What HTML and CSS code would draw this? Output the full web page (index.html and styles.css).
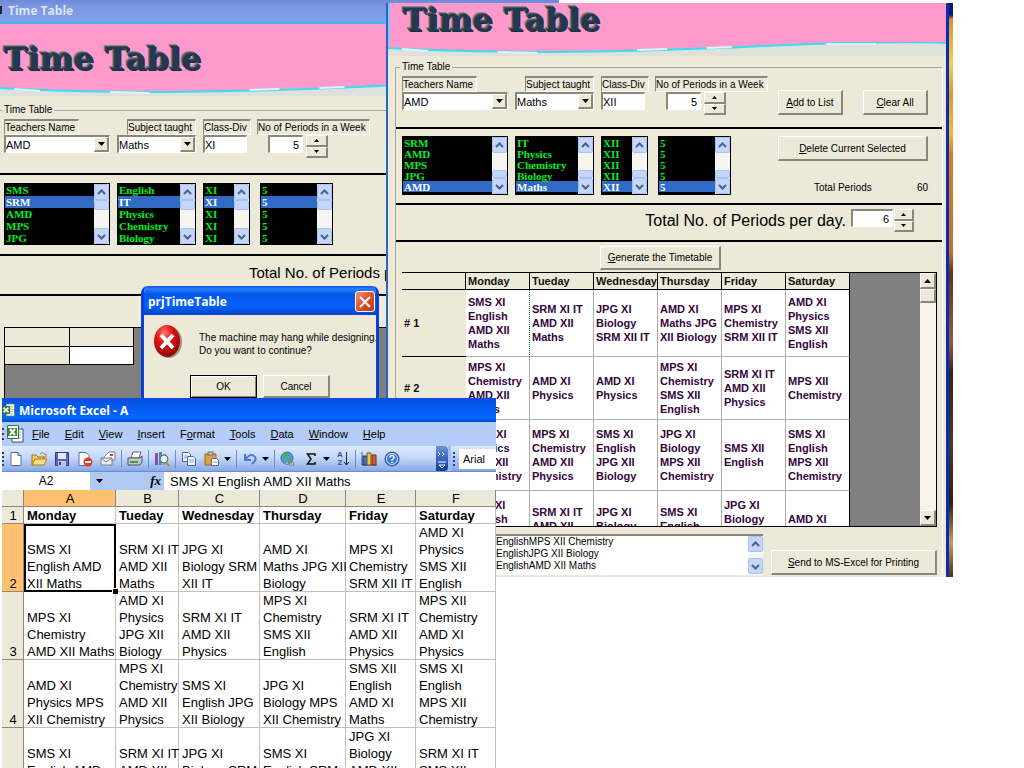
FILE: index.html
```
<!doctype html>
<html lang="en">
<head>
<meta charset="utf-8" />
<title>Time Table</title>
<link rel="stylesheet" href="styles.css">
</head>
<body>

<svg class="symbols" aria-hidden="true">
	<symbol id="chevron-up" viewBox="0 0 9 9"><path d="M1 6 4.500 2.500 8 6" fill="none" stroke="#4d6185" stroke-width="2"/></symbol>
	<symbol id="chevron-down" viewBox="0 0 9 9"><path d="M1 3 4.500 6.500 8 3" fill="none" stroke="#4d6185" stroke-width="2"/></symbol>
	<symbol id="tri-up" viewBox="0 0 7 4"><path d="M0 4 3.500 0 7 4z"/></symbol>
	<symbol id="tri-down" viewBox="0 0 7 4"><path d="M0 0h7L3.500 4z"/></symbol>
	<symbol id="excel" viewBox="0 0 16 16">
		<path d="M5 .5h10.500v15H5z" fill="#fff" stroke="#4b7a4b"/>
		<path d="M10 4h4M10 7h4M10 10h4M10 13h4" stroke="#8fb78f"/>
		<path d="M0 3h10v10H0z" fill="#2f7d3a"/>
		<path d="M2 5l6 6M8 5l-6 6" stroke="#fff" stroke-width="2"/>
	</symbol>
	<symbol id="wave" viewBox="0 0 560 14" preserveAspectRatio="none">
		<path d="M0 0H560V1Q460 1 380 4T160 10Q70 10 0 6z" fill="#ff99cc"/>
		<path d="M0 6Q70 10 160 10T380 4T560 1" fill="none" stroke="#35dff0" stroke-width="2"/>
		<path d="M14 7 40 9M110 10 150 11M250 8 280 7M320 6 345 5M440 2 490 2" stroke="#d8f8fa" stroke-width="2"/>
	</symbol>
</svg>

<main class="desktop">

<section class="window back">
	<header class="faded-title"><span class="app-dot"></span>Time Table</header>
	<div class="banner"><h1>Time Table</h1></div>
	<svg class="wave" preserveAspectRatio="none"><use href="#wave"/></svg>
	<fieldset class="frame">
		<legend>Time Table</legend>
		<div class="section fields">
			<div class="field-grid">
				<div class="field">
					<label for="b-teacher">Teachers Name</label>
					<div class="combo"><select id="b-teacher"><option>AMD</option></select><span class="drop"><svg><use href="#tri-down"/></svg></span></div>
				</div>
				<div class="field">
					<label class="indent" for="b-subject">Subject taught</label>
					<div class="combo"><select id="b-subject"><option>Maths</option></select><span class="drop"><svg><use href="#tri-down"/></svg></span></div>
				</div>
				<div class="field">
					<label for="b-class">Class-Div</label>
					<input class="text" id="b-class" type="text" value="XI">
				</div>
				<div class="field">
					<label for="b-periods">No of Periods in a Week</label>
					<div class="spinner inset"><input class="text" id="b-periods" type="text" value="5"><span class="spin"><button aria-label="More"><svg><use href="#tri-up"/></svg></button><button aria-label="Fewer"><svg><use href="#tri-down"/></svg></button></span></div>
				</div>
			</div>
		</div>
		<div class="section lists">
			<div class="field-grid">
				<div class="list">
					<select size="5" aria-label="Teachers"><option>SMS</option><option selected>SRM</option><option>AMD</option><option>MPS</option><option>JPG</option></select>
					<div class="scroll"><button aria-label="Up"><svg><use href="#chevron-up"/></svg></button><i class="thumb"></i><button aria-label="Down"><svg><use href="#chevron-down"/></svg></button></div>
				</div>
				<div class="list">
					<select size="5" aria-label="Subjects"><option>English</option><option selected>IT</option><option>Physics</option><option>Chemistry</option><option>Biology</option></select>
					<div class="scroll"><button aria-label="Up"><svg><use href="#chevron-up"/></svg></button><i class="thumb"></i><button aria-label="Down"><svg><use href="#chevron-down"/></svg></button></div>
				</div>
				<div class="list">
					<select size="5" aria-label="Classes"><option>XI</option><option selected>XI</option><option>XI</option><option>XI</option><option>XI</option></select>
					<div class="scroll"><button aria-label="Up"><svg><use href="#chevron-up"/></svg></button><i class="thumb"></i><button aria-label="Down"><svg><use href="#chevron-down"/></svg></button></div>
				</div>
				<div class="list short">
					<select size="5" aria-label="Periods"><option>5</option><option selected>5</option><option>5</option><option>5</option><option>5</option></select>
					<div class="scroll"><button aria-label="Up"><svg><use href="#chevron-up"/></svg></button><i class="thumb"></i><button aria-label="Down"><svg><use href="#chevron-down"/></svg></button></div>
				</div>
			</div>
		</div>
		<div class="section total"><span class="per-day">Total No. of Periods per day.</span></div>
		<div class="empty-grid">
			<table>
				<tr><td></td><td></td></tr>
				<tr><td></td><td class="open"></td></tr>
			</table>
		</div>
	</fieldset>
</section>

<div class="wallpaper"></div>

<section class="window front">
	<div class="banner"><h1>Time Table</h1></div>
	<svg class="wave" preserveAspectRatio="none"><use href="#wave"/></svg>
	<fieldset class="frame">
		<legend>Time Table</legend>
		<div class="section fields">
			<div class="field-grid">
				<div class="field">
					<label for="f-teacher">Teachers Name</label>
					<div class="combo"><select id="f-teacher"><option>AMD</option></select><span class="drop"><svg><use href="#tri-down"/></svg></span></div>
				</div>
				<div class="field">
					<label class="indent" for="f-subject">Subject taught</label>
					<div class="combo"><select id="f-subject"><option>Maths</option></select><span class="drop"><svg><use href="#tri-down"/></svg></span></div>
				</div>
				<div class="field">
					<label for="f-class">Class-Div</label>
					<input class="text" id="f-class" type="text" value="XII">
				</div>
				<div class="field">
					<label for="f-periods">No of Periods in a Week</label>
					<div class="spinner inset"><input class="text" id="f-periods" type="text" value="5"><span class="spin"><button aria-label="More"><svg><use href="#tri-up"/></svg></button><button aria-label="Fewer"><svg><use href="#tri-down"/></svg></button></span></div>
				</div>
			</div>
			<div class="actions">
				<button class="btn"><u>A</u>dd to List</button>
				<button class="btn"><u>C</u>lear All</button>
			</div>
		</div>
		<div class="section lists">
			<div class="field-grid">
				<div class="list">
					<select size="5" aria-label="Teachers"><option>SRM</option><option>AMD</option><option>MPS</option><option>JPG</option><option selected>AMD</option></select>
					<div class="scroll low"><button aria-label="Up"><svg><use href="#chevron-up"/></svg></button><i class="thumb"></i><button aria-label="Down"><svg><use href="#chevron-down"/></svg></button></div>
				</div>
				<div class="list">
					<select size="5" aria-label="Subjects"><option>IT</option><option>Physics</option><option>Chemistry</option><option>Biology</option><option selected>Maths</option></select>
					<div class="scroll low"><button aria-label="Up"><svg><use href="#chevron-up"/></svg></button><i class="thumb"></i><button aria-label="Down"><svg><use href="#chevron-down"/></svg></button></div>
				</div>
				<div class="list">
					<select size="5" aria-label="Classes"><option>XII</option><option>XII</option><option>XII</option><option>XII</option><option selected>XII</option></select>
					<div class="scroll low"><button aria-label="Up"><svg><use href="#chevron-up"/></svg></button><i class="thumb"></i><button aria-label="Down"><svg><use href="#chevron-down"/></svg></button></div>
				</div>
				<div class="list short">
					<select size="5" aria-label="Periods"><option>5</option><option>5</option><option>5</option><option>5</option><option selected>5</option></select>
					<div class="scroll low"><button aria-label="Up"><svg><use href="#chevron-up"/></svg></button><i class="thumb"></i><button aria-label="Down"><svg><use href="#chevron-down"/></svg></button></div>
				</div>
			</div>
			<div class="summary">
				<button class="btn"><u>D</u>elete Current Selected</button>
				<p><span>Total Periods</span><span>60</span></p>
			</div>
		</div>
		<div class="section total">
			<label class="per-day" for="per-day">Total No. of Periods per day.</label>
			<div class="spinner"><input class="text" id="per-day" type="text" value="6"><span class="spin"><button aria-label="More"><svg><use href="#tri-up"/></svg></button><button aria-label="Fewer"><svg><use href="#tri-down"/></svg></button></span></div>
		</div>
		<div class="generate"><button class="btn"><u>G</u>enerate the Timetable</button></div>
		<div class="timetable">
			<div class="rows">
				<table>
					<thead>
						<tr><th></th><th>Monday</th><th>Tueday</th><th>Wednesday</th><th>Thursday</th><th>Friday</th><th>Saturday</th></tr>
					</thead>
					<tbody>
						<tr class="r1">
							<th># 1</th>
							<td class="current">SMS XI<br>English<br>AMD XII<br>Maths</td>
							<td>SRM XI IT<br>AMD XII<br>Maths</td>
							<td>JPG XI<br>Biology<br>SRM XII IT</td>
							<td>AMD XI<br>Maths JPG<br>XII Biology</td>
							<td>MPS XI<br>Chemistry<br>SRM XII IT</td>
							<td>AMD XI<br>Physics<br>SMS XII<br>English</td>
						</tr>
						<tr class="r2">
							<th># 2</th>
							<td>MPS XI<br>Chemistry<br>AMD XII<br>Maths</td>
							<td>AMD XI<br>Physics</td>
							<td>AMD XI<br>Physics</td>
							<td>MPS XI<br>Chemistry<br>SMS XII<br>English</td>
							<td>SRM XI IT<br>AMD XII<br>Physics</td>
							<td>MPS XII<br>Chemistry</td>
						</tr>
						<tr class="r3">
							<th># 3</th>
							<td>AMD XI<br>Physics<br>MPS XII<br>Chemistry</td>
							<td>MPS XI<br>Chemistry<br>AMD XII<br>Physics</td>
							<td>SMS XI<br>English<br>JPG XII<br>Biology</td>
							<td>JPG XI<br>Biology<br>MPS XII<br>Chemistry</td>
							<td>SMS XII<br>English</td>
							<td>SMS XI<br>English<br>MPS XII<br>Chemistry</td>
						</tr>
						<tr class="r3">
							<th># 4</th>
							<td>SMS XI<br>English<br>AMD XII<br>Maths</td>
							<td>SRM XI IT<br>AMD XII<br>Physics</td>
							<td>JPG XI<br>Biology<br>SRM XII IT</td>
							<td>SMS XI<br>English<br>SRM XII IT</td>
							<td>JPG XI<br>Biology<br>AMD XII<br>Physics</td>
							<td>AMD XI<br>Physics</td>
						</tr>
					</tbody>
				</table>
			</div>
			<div class="classic-scroll"><button aria-label="Up"><svg><use href="#tri-up"/></svg></button><i class="thumb"></i><button aria-label="Down"><svg><use href="#tri-down"/></svg></button></div>
		</div>
		<div class="output">
			<div class="log">
				<textarea aria-label="Output" rows="3">EnglishMPS XII Chemistry
EnglishJPG XII Biology
EnglishAMD XII Maths</textarea>
				<div class="scroll"><button aria-label="Up"><svg><use href="#chevron-up"/></svg></button><button aria-label="Down"><svg><use href="#chevron-down"/></svg></button></div>
			</div>
			<button class="btn"><u>S</u>end to MS-Excel for Printing</button>
		</div>
	</fieldset>
</section>

<section class="dialog" role="dialog" aria-labelledby="dialog-title">
	<header><h2 id="dialog-title">prjTimeTable</h2><button class="close" aria-label="Close"><svg viewBox="0 0 12 12"><path d="M1 1l10 10M11 1 1 11" stroke="#fff" stroke-width="2"/></svg></button></header>
	<div class="message">
		<svg class="error" viewBox="0 0 30 34">
			<defs><radialGradient id="ball" cx=".4" cy=".25" r=".8"><stop offset="0" stop-color="#f77"/><stop offset=".4" stop-color="#e01414"/><stop offset="1" stop-color="#8c0505"/></radialGradient></defs>
			<ellipse cx="15" cy="17" rx="13" ry="16" fill="#9a9788"/>
			<ellipse cx="13" cy="16" rx="13" ry="16" fill="url(#ball)"/>
			<path d="M7 10l12 13M19 10 7 23" stroke="#fff" stroke-width="4"/>
		</svg>
		<p>The machine may hang while designing,<br>Do you want to continue?</p>
	</div>
	<div class="choices"><button class="btn default">OK</button><button class="btn">Cancel</button></div>
</section>

<section class="excel">
	<header><svg><use href="#excel"/></svg><h2>Microsoft Excel - A</h2></header>
	<nav class="menu">
		<svg viewBox="0 0 22 18"><path d="M1 3v2M1 8v2M1 13v2" stroke="#27408b" stroke-width="2"/><path d="M10 4h11v13H10z" fill="#fff" stroke="#3c4a78"/><path d="M15 7h4M15 10h4M15 13h4" stroke="#8a9ac0"/><path d="M5.500.5h11v13h-11z" fill="#f5fff5" stroke="#3d703d"/><path d="M6 3h9v8H6z" fill="#3b8a3b"/><path d="M8 4l5 6M13 4l-5 6" stroke="#fff" stroke-width="2"/></svg>
		<a href="#"><u>F</u>ile</a><a href="#"><u>E</u>dit</a><a href="#"><u>V</u>iew</a><a href="#"><u>I</u>nsert</a><a href="#">F<u>o</u>rmat</a><a href="#"><u>T</u>ools</a><a href="#"><u>D</u>ata</a><a href="#"><u>W</u>indow</a><a href="#"><u>H</u>elp</a>
	</nav>
	<div class="tools">
		<div class="toolbar">
			<svg class="grip" viewBox="0 0 4 16"><path d="M1 1v2M1 5v2M1 9v2M1 13v2" stroke="#27408b" stroke-width="2"/></svg>
			<button aria-label="New"><svg viewBox="0 0 16 16"><path d="M3 1.500h7l3 3v10H3z" fill="#fff" stroke="#5a6a94"/><path d="M10 1.500v3h3" fill="#cdd8f0" stroke="#5a6a94"/></svg></button>
			<button aria-label="Open"><svg viewBox="0 0 16 16"><path d="M1 14V4h4l2 2h6v3" fill="#f0c860" stroke="#a8771a"/><path d="M1 14 4 8h12l-3 6z" fill="#fddc7c" stroke="#a8771a"/><path d="M9 3q3-3 5 1l1-1v3h-3" fill="none" stroke="#d27b1e"/></svg></button>
			<button aria-label="Save"><svg viewBox="0 0 16 16"><path d="M1.500 1.500h13v13h-13z" fill="#5b62bf" stroke="#34398a"/><path d="M4 2h8v6H4z" fill="#e6eafc"/><path d="M4 10h8v5H4z" fill="#c2c6e2"/><path d="M5 11h2v3H5z" fill="#34398a"/></svg></button>
			<button aria-label="Permission"><svg viewBox="0 0 16 16"><path d="M2 1.500h7l3 3v10H2z" fill="#fff" stroke="#5a6a94"/><circle cx="11" cy="11" r="4.500" fill="#dd3f20"/><path d="M8 11h6" stroke="#fff" stroke-width="2"/></svg></button>
			<button aria-label="E-mail"><svg viewBox="0 0 16 16"><path d="M4 6 9 1h6v8H4z" fill="#fff" stroke="#7d7d8e"/><path d="M10 3h3v2h-3z" fill="#d04030"/><path d="M1 7h11v7H1z" fill="#ececf2" stroke="#7d7d8e"/><path d="M1 7l5 4 6-4" fill="none" stroke="#7d7d8e"/></svg></button>
			<span class="sep"></span>
			<button aria-label="Print"><svg viewBox="0 0 16 16"><path d="M4 7 6 1h8l-2 6z" fill="#fff" stroke="#667"/><path d="M1 7h12l2-2v6l-2 3H1z" fill="#c3c9d2" stroke="#4b5563"/><path d="M3 10h8v2H3z" fill="#3f9d3b"/></svg></button>
			<span class="sep"></span>
			<button aria-label="Research"><svg viewBox="0 0 16 16"><path d="M1 2h3v12H1z" fill="#8a4fa5"/><path d="M5 1h3v13H5z" fill="#5b83c4"/><path d="M9 3h3v11H9z" fill="#9aa6b8"/><circle cx="10" cy="8" r="4" fill="#dff5f0" stroke="#4f6a6a"/><path d="M12 11l3 4" stroke="#b08020" stroke-width="2"/></svg></button>
			<span class="sep"></span>
			<button aria-label="Copy"><svg viewBox="0 0 16 16"><path d="M1.500 1.500h6l2 2v7h-8z" fill="#fff" stroke="#4a6ab0"/><path d="M3 5h4M3 7h4" stroke="#7c9adc"/><path d="M6.500 5.500h6l2 2v7h-8z" fill="#fff" stroke="#4a6ab0"/><path d="M8 9h5M8 11h5" stroke="#7c9adc"/></svg></button>
			<button aria-label="Paste"><svg viewBox="0 0 16 16"><path d="M1 3h11v11H1z" fill="#e0a03c" stroke="#96641a"/><path d="M4 1h5v3H4z" fill="#c9ced8" stroke="#666"/><path d="M7.500 7.500h5l2 2v5h-7z" fill="#fff" stroke="#5a6a94"/><path d="M9 11h4" stroke="#7c9adc"/></svg></button>
			<svg class="more"><use href="#tri-down"/></svg>
			<span class="sep"></span>
			<button aria-label="Undo"><svg viewBox="0 0 16 16"><path d="M3 3v6h6M3.500 8.500Q8 2 12 5T10 13" fill="none" stroke="#4a78d4" stroke-width="2"/></svg></button>
			<svg class="more"><use href="#tri-down"/></svg>
			<span class="sep"></span>
			<button aria-label="Hyperlink"><svg viewBox="0 0 16 16"><circle cx="7" cy="7" r="6" fill="#4f9fdc" stroke="#2b68a8"/><path d="M3 3q4-3 6 0-1 4-5 3zM7 8q4-1 5 1-2 4-4 3z" fill="#4db04a"/><path d="M5 12h4M9 13h5" stroke="#77808f" stroke-width="3"/><path d="M6 12h2M10 13h3" stroke="#eef"/></svg></button>
			<button aria-label="AutoSum"><svg viewBox="0 0 16 16"><path d="M12 5V3H4.500L8 8l-3.500 5H12v-2" fill="none" stroke="#111" stroke-width="1.500"/></svg></button>
			<svg class="more"><use href="#tri-down"/></svg>
			<button class="sort" aria-label="Sort ascending"><span>A<br>Z</span><svg viewBox="0 0 7 16"><path d="M3.500 1v13M1 11l2.500 3L6 11" fill="none" stroke="#222"/></svg></button>
			<span class="sep"></span>
			<button aria-label="Chart Wizard"><svg viewBox="0 0 16 16"><path d="M1 1v13h15" fill="none" stroke="#556"/><path d="M2 5h4v9H2z" fill="#3a72d8" stroke="#234"/><path d="M6 2h4v12H6z" fill="#f2c430" stroke="#753"/><path d="M11 4h4v10h-4z" fill="#dc5a28" stroke="#632"/></svg></button>
			<button aria-label="Help"><svg viewBox="0 0 16 16"><circle cx="8" cy="8" r="7" fill="#3c78dc" stroke="#1e4ea8"/><circle cx="8" cy="8" r="5.500" fill="none" stroke="#dbe8ff"/><path d="M6 6.500q0-2 2-2t2 2q0 1-2 2.500V10" fill="none" stroke="#fff" stroke-width="1.500"/><path d="M7 11h2v1H7z" fill="#fff"/></svg></button>
			<button class="overflow" aria-label="Toolbar options"><svg viewBox="0 0 10 20"><path d="M1 3l2 2-2 2M5 3l2 2-2 2M1 13h8M2 16h6l-3 3z" fill="none" stroke="#fff"/></svg></button>
		</div>
		<div class="font-bar">
			<svg class="grip" viewBox="0 0 4 16"><path d="M1 1v2M1 5v2M1 9v2M1 13v2" stroke="#27408b" stroke-width="2"/></svg>
			<input type="text" aria-label="Font" value="Arial">
		</div>
	</div>
	<div class="formula">
		<input class="name-box" type="text" aria-label="Name Box" value="A2">
		<span class="fx"><svg><use href="#tri-down"/></svg><em>fx</em></span>
		<input class="content" type="text" aria-label="Formula" value="SMS XI English AMD XII Maths">
	</div>
	<table class="sheet">
		<colgroup><col class="num"><col class="a"><col class="b"><col class="c"><col class="d"><col class="e"><col class="f"></colgroup>
		<thead>
			<tr><th></th><th class="on">A</th><th>B</th><th>C</th><th>D</th><th>E</th><th>F</th></tr>
		</thead>
		<tbody>
			<tr class="days"><th>1</th><td>Monday</td><td>Tueday</td><td>Wednesday</td><td>Thursday</td><td>Friday</td><td>Saturday</td></tr>
			<tr>
				<th class="on">2</th>
				<td class="active">SMS XI<br>English AMD<br>XII Maths</td>
				<td>SRM XI IT<br>AMD XII<br>Maths</td>
				<td>JPG XI<br>Biology SRM<br>XII IT</td>
				<td>AMD XI<br>Maths JPG XII<br>Biology</td>
				<td>MPS XI<br>Chemistry<br>SRM XII IT</td>
				<td>AMD XI<br>Physics<br>SMS XII<br>English</td>
			</tr>
			<tr>
				<th>3</th>
				<td>MPS XI<br>Chemistry<br>AMD XII Maths</td>
				<td>AMD XI<br>Physics<br>JPG XII<br>Biology</td>
				<td>SRM XI IT<br>AMD XII<br>Physics</td>
				<td>MPS XI<br>Chemistry<br>SMS XII<br>English</td>
				<td>SRM XI IT<br>AMD XII<br>Physics</td>
				<td>MPS XII<br>Chemistry<br>AMD XI<br>Physics</td>
			</tr>
			<tr>
				<th>4</th>
				<td>AMD XI<br>Physics MPS<br>XII Chemistry</td>
				<td>MPS XI<br>Chemistry<br>AMD XII<br>Physics</td>
				<td>SMS XI<br>English JPG<br>XII Biology</td>
				<td>JPG XI<br>Biology MPS<br>XII Chemistry</td>
				<td>SMS XII<br>English<br>AMD XI<br>Maths</td>
				<td>SMS XI<br>English<br>MPS XII<br>Chemistry</td>
			</tr>
			<tr>
				<th>5</th>
				<td>SMS XI<br>English AMD<br>XII Maths</td>
				<td>SRM XI IT<br>AMD XII<br>Physics</td>
				<td>JPG XI<br>Biology SRM<br>XII IT</td>
				<td>SMS XI<br>English SRM<br>XII IT</td>
				<td>JPG XI<br>Biology<br>AMD XII<br>Physics</td>
				<td>SRM XI IT<br>SMS XII<br>English</td>
			</tr>
		</tbody>
	</table>
</section>

</main>

</body>
</html>
```
FILE: styles.css
```
:root {
	--face: #ece9d8;
	--shade: #8a8878;
	--blue: #316ac5;
	--pink: #ff99cc;
	font-family: "Liberation Sans", Arial, sans-serif;
}

* {
	box-sizing: border-box;
}

body {
	margin: 0;
	background: #fff;
	font-size: 11px;
	color: #000;
}

h1, h2, p {
	margin: 0;
}

button, input, select, textarea {
	margin: 0;
	padding: 0;
	border: 0;
	border-radius: 0;
	background: none;
	font: inherit;
	color: inherit;
	appearance: none;
}

svg {
	display: block;
	flex: none;
}

.symbols {
	display: none;
}

/* Windows lie freely on the desktop */

.desktop {
	position: relative;
	height: 100vh;
	overflow: hidden;
}

.window, .wallpaper, .dialog, .excel {
	position: absolute;
	overflow: hidden;
}

.window {
	background: var(--face);
	display: flex;
	flex-direction: column;
	font-size: 10px;
}

.back {
	left: 0;
	top: 0;
	width: 559px;
	height: 400px;
}

.front {
	left: 386px;
	top: 3px;
	width: 563px;
	height: 574px;
	border-left: 2px solid #2866c8;
	border-right: 3px solid #0a2cb0;
}

.wallpaper {
	left: 396px;
	top: 3px;
	width: 557px;
	height: 574px;
	background: linear-gradient(#0a1a70 12px, #d89030 16px, #f8cc50 60px, #e0982c 90px, #f4b840 130px, #d88020 150px, #c07030 250px, #6a3018 270px, #9a5a38 340px, #33231c 370px, #4a3828 440px, #2c2018 500px, #c0a060 540px, #4a3018);
}


/* Time table windows */

.faded-title {
	display: flex;
	flex: none;
	align-items: center;
	gap: 6px;
	height: 24px;
	padding-bottom: 2px;
	border-bottom: 2px solid #3cb8ee;
	background: linear-gradient(#6d88d8, #7b98e2 6px, #7ea2e8);
	font: bold 12px "Open Sans", sans-serif;
	color: #dbe6fa;
}

.app-dot {
	width: 2px;
	height: 8px;
	background: #222;
}

.banner {
	flex: none;
	background: var(--pink);
}

.back .banner {
	height: 58px;
	padding: 17px 4px 0;
}

.front .banner {
	height: 39px;
	padding: 0 13px;
	border-left: 2px solid #7ec8f4;
}

.banner h1 {
	font: bold 32px/36px "DejaVu Serif", serif;
	white-space: nowrap;
	color: #26384e;
	text-shadow: -1px -1px 0 #4c525c, -2px -2px 0 #858a90, 1px 1px 0 #16304a;
}

.front h1 {
	line-height: 34px;
}

.wave {
	width: 100%;
	height: 14px;
	background: #dfe2dc;
}

.frame {
	flex: 1;
	min-width: 0;
	margin: 0;
	padding: 0;
	border: 1px solid #aaa89a;
	border-bottom: 0;
}

.back .frame {
	margin-top: 7px;
	border-left: 0;
}

.front .frame {
	margin: 4px 3px 0 7px;
	border-right-color: #fff;
}

legend {
	height: 14px;
	margin-left: 2px;
	padding: 0 2px;
	line-height: 14px;
}

.front legend {
	margin-left: 4px;
}

.section {
	display: flex;
	justify-content: space-between;
	border-bottom: 2px solid #000;
}

.back .section {
	padding-left: 4px;
}

.front .section {
	padding: 0 14px 0 6px;
}

.back .fields { height: 58px; }
.back .lists { height: 81px; padding-top: 8px; }
.back .total { height: 40px; }
.front .fields { height: 55px; }
.front .lists { height: 76px; padding-top: 7px; }
.front .total { height: 37px; }

.field-grid {
	display: grid;
	grid-template-columns: 106px 79px 47px 108px;
	column-gap: 7px;
	align-content: start;
}

.fields .field-grid {
	padding-top: 2px;
}

.field {
	display: flex;
	flex-direction: column;
	align-items: flex-start;
}

.field label {
	height: 16px;
	padding-right: 3px;
	border: 1px solid #fff;
	border-top: 2px solid var(--shade);
	border-left-color: var(--shade);
	line-height: 14px;
	white-space: nowrap;
}

.field .indent {
	align-self: flex-end;
}

.combo, .text {
	height: 18px;
	border: 1px solid #fff;
	border-top: 2px solid var(--shade);
	border-left: 2px solid var(--shade);
	background: #fff;
	font-size: 11px;
}

.combo {
	display: flex;
	width: 100%;
}

.combo select {
	flex: 1;
	min-width: 0;
}

.text {
	width: 44px;
}

.drop, .spin button, .btn, .classic-scroll button, .classic-scroll .thumb {
	border: 1px solid #fff;
	border-right: 2px solid var(--shade);
	border-bottom: 2px solid var(--shade);
	background: var(--face);
}

.drop {
	display: flex;
	align-items: center;
	justify-content: center;
	width: 15px;
}

.drop svg, .more, .classic-scroll svg {
	width: 7px;
	height: 4px;
}

.spinner {
	display: flex;
	gap: 3px;
}

.inset {
	padding-left: 11px;
}

.spinner .text {
	width: 35px;
	padding-right: 3px;
	text-align: right;
}

.spin {
	display: flex;
	flex-direction: column;
	height: 23px;
}

.spin button {
	display: flex;
	flex: 1;
	align-items: center;
	justify-content: center;
	width: 22px;
}

.spin svg {
	width: 5px;
	height: 3px;
}

.btn {
	height: 25px;
	white-space: nowrap;
}

.actions {
	display: flex;
	gap: 20px;
	padding-top: 16px;
}

.actions .btn {
	width: 65px;
}

.list {
	display: flex;
	height: 62px;
	border: 1px solid #000;
	background: #000;
}

.front .list {
	height: 59px;
}

.short {
	width: 73px;
	margin-left: 3px;
}

.list select {
	flex: 1;
	min-width: 0;
	overflow: hidden;
	color: #00f020;
}

.list option {
	height: 12px;
	min-height: 12px;
	padding: 0 1px;
	font: bold 11px/12px "Liberation Serif", serif;
}

.front .list option {
	height: 11px;
	min-height: 11px;
	line-height: 11px;
}

.list option:checked {
	background: linear-gradient(var(--blue), var(--blue));
	color: #fff;
}

.scroll {
	display: flex;
	flex-direction: column;
	justify-content: space-between;
	width: 15px;
	background: #f6f5f0;
}

.scroll button, .scroll .thumb {
	border: 1px solid #a9c0f4;
	border-radius: 2px;
	background: #c4d6fc;
}

.scroll button {
	display: flex;
	align-items: center;
	justify-content: center;
	height: 16px;
}

.scroll button svg {
	width: 9px;
	height: 9px;
}

.scroll .thumb {
	height: 10px;
	margin-bottom: auto;
}

.scroll.low .thumb {
	height: 8px;
	margin: auto 0 0;
}

.summary {
	width: 150px;
}

.summary .btn {
	width: 100%;
}

.summary p {
	display: flex;
	justify-content: space-between;
	padding: 21px 0 0 36px;
}

.per-day {
	font-size: 15px;
	line-height: 34px;
	white-space: nowrap;
}

.back .per-day {
	padding-left: 245px;
}

.front .total {
	justify-content: flex-end;
	gap: 5px;
	padding: 0 28px 0 0;
}

.front .per-day {
	font-size: 16px;
	line-height: 31px;
}

.total .spinner {
	gap: 1px;
	padding-top: 4px;
}

.total .text {
	width: 42px;
}

.total .spin button {
	width: 20px;
}

.empty-grid {
	height: 80px;
	margin: 31px 0 0 4px;
	border: 1px solid #000;
	background: #808080;
}

.empty-grid table {
	border-collapse: collapse;
}

.empty-grid td {
	width: 64px;
	height: 18px;
	padding: 0;
	border: 1px solid #000;
	border-top: 0;
	border-left: 0;
	background: var(--face);
}

.empty-grid .open {
	background: #fff;
}

.generate {
	display: flex;
	justify-content: center;
	padding: 4px 17px 2px 0;
}

.generate .btn {
	width: 121px;
	height: 24px;
}

.timetable {
	display: flex;
	height: 255px;
	margin: 0 5px 0 6px;
	border: 1px solid #000;
	border-left: 0;
	background: #808080;
}

.rows {
	flex: 1;
	overflow: hidden;
}

.rows table {
	width: 448px;
	table-layout: fixed;
	border-collapse: separate;
	border-spacing: 0;
	font-size: 11px;
	font-weight: bold;
	line-height: 14px;
	text-align: left;
	white-space: nowrap;
	color: #35063e;
}

.rows th, .rows td {
	padding: 0 0 0 2px;
	border: 0 solid #a8b0ac;
	border-width: 0 1px 1px 0;
	background: #fff;
}

.rows th {
	height: 17px;
	border-color: #000;
	background: var(--face);
	color: #111;
}

.rows tbody th {
	border-right: 0;
}

.rows tr > :last-child {
	border-right-color: #000;
}

.rows .current {
	border-right: 1px dotted #063;
}

.r1 > * { height: 67px; }
.r2 > * { height: 63px; }
.r3 > * { height: 71px; }
.rows .r1 th { height: 67px; }

.classic-scroll {
	display: flex;
	flex-direction: column;
	width: 16px;
	background: #f5f3ea;
}

.classic-scroll button {
	display: flex;
	align-items: center;
	justify-content: center;
	height: 16px;
}

.classic-scroll .thumb {
	height: 14px;
	margin-bottom: auto;
}

.output {
	display: flex;
	align-items: flex-end;
	gap: 8px;
	margin: 7px 5px 0 6px;
}

.log {
	display: flex;
	flex: 1;
	height: 41px;
	border-top: 2px solid var(--shade);
	border-bottom: 1px solid #fff;
	background: #fff;
}

.log textarea {
	flex: 1;
	padding-left: 94px;
	overflow: hidden;
	resize: none;
	line-height: 12px;
	white-space: pre;
}

.output .btn {
	width: 166px;
}


/* Message box */

.dialog {
	left: 141px;
	top: 286px;
	width: 238px;
	height: 120px;
	border: 3px solid #0a40d8;
	border-top: 0;
	border-radius: 7px 7px 0 0;
	background: var(--face);
	font-size: 10px;
}

.dialog header {
	display: flex;
	align-items: center;
	justify-content: space-between;
	height: 29px;
	margin: 0 -3px;
	padding: 2px 4px 0 7px;
	background: linear-gradient(#0a52e0, #2a80ff 3px, #0458e8 8px, #0560f8 20px, #0343c8);
}

.dialog h2, .excel h2 {
	font: bold 12px "Open Sans", sans-serif;
	color: #fff;
}

.close {
	display: flex;
	align-items: center;
	justify-content: center;
	width: 20px;
	height: 21px;
	border: 1px solid #fff;
	border-radius: 3px;
	background: linear-gradient(135deg, #f09070, #e0502c 50%, #c03810);
}

.close svg {
	width: 12px;
	height: 12px;
}

.message {
	display: flex;
	gap: 15px;
	padding: 10px 0 10px 10px;
}

.error {
	width: 30px;
	height: 34px;
}

.message p {
	padding-top: 6px;
	line-height: 13px;
	white-space: nowrap;
}

.choices {
	display: flex;
	gap: 6px;
	padding: 6px 46px;
}

.choices .btn {
	width: 67px;
	height: 23px;
}

.choices .default {
	border: 1px solid #000;
	box-shadow: inset 1px 1px #fff, inset -1px -1px var(--shade);
}


/* Excel */

.excel {
	left: 2px;
	top: 398px;
	width: 494px;
	bottom: 0;
	background: #fff;
}

.excel header {
	display: flex;
	align-items: center;
	gap: 4px;
	height: 24px;
	background: linear-gradient(#0a4ee0, #0558ee 8px, #0666ff 20px, #0048d0);
}

.excel header svg {
	width: 13px;
	height: 14px;
}

.menu {
	display: flex;
	align-items: center;
	gap: 15px;
	height: 24px;
	background: #b4ccf8;
	font-size: 11px;
}

.menu svg {
	width: 22px;
	height: 18px;
	margin-right: -7px;
}

.menu a {
	color: #000;
	text-decoration: none;
}

.tools {
	display: flex;
	height: 26px;
	border-bottom: 1px solid #6c8cc8;
	background: #9ebef5;
}

.toolbar {
	display: flex;
	flex: 1;
	align-items: center;
	gap: 7px;
	background: linear-gradient(#dde9fd, #c2d7f8 12px, #86a9e6);
}

.toolbar button svg {
	width: 16px;
	height: 16px;
}

.grip {
	width: 4px;
	height: 16px;
}

.toolbar .grip {
	margin-right: -5px;
}

.sep {
	width: 1px;
	height: 18px;
	margin: 0 -2px;
	background: #6a8ccb;
}

.toolbar .more {
	margin-left: -3px;
}

.toolbar .sort {
	display: flex;
	align-items: center;
}

.sort span {
	font: bold 8px/8px "Liberation Sans", sans-serif;
	color: #4a4a9a;
}

.toolbar .sort svg {
	width: 7px;
}

.toolbar .overflow {
	display: flex;
	align-items: center;
	justify-content: center;
	align-self: stretch;
	width: 12px;
	margin-left: auto;
	border-radius: 0 4px 4px 0;
	background: linear-gradient(#6a90e0, #123a98);
}

.toolbar .overflow svg {
	width: 10px;
	height: 20px;
}

.font-bar {
	display: flex;
	align-items: center;
	gap: 2px;
	width: 45px;
	margin-left: 3px;
	padding-left: 2px;
	background: linear-gradient(#dde9fd, #86a9e6);
}

.font-bar input {
	flex: 1;
	min-width: 0;
	height: 20px;
	padding-left: 4px;
	background: #fff;
	font-size: 11px;
}

.formula {
	display: flex;
	height: 18px;
	background: #b0c8f4;
	font-size: 13px;
}

.name-box {
	width: 88px;
	background: #fff;
	font-size: 12px;
	text-align: center;
}

.fx {
	display: flex;
	align-items: center;
	justify-content: space-between;
	width: 74px;
	padding: 0 3px 0 6px;
	font: bold 13px "Liberation Serif", serif;
}

.fx svg {
	width: 7px;
	height: 4px;
}

.formula .content {
	flex: 1;
	min-width: 0;
	padding-left: 6px;
	background: #fff;
}

.sheet {
	width: 100%;
	table-layout: fixed;
	border-collapse: separate;
	border-spacing: 0;
	font-size: 13px;
	line-height: 17px;
	white-space: nowrap;
}

.num { width: 22px; }
.a { width: 92px; }
.b { width: 63px; }
.c { width: 81px; }
.d { width: 86px; }
.e { width: 70px; }

.sheet th, .sheet td {
	height: 68px;
	padding: 0;
	vertical-align: bottom;
	box-shadow: inset -1px -1px #c0c0c0;
}

.sheet td {
	padding-left: 3px;
}

.sheet th {
	background: var(--face);
	box-shadow: inset -1px -1px #8c8a7c;
	font-weight: normal;
	text-align: center;
}

.sheet thead th, .sheet .days > * {
	height: 17px;
}

.sheet .days td {
	font-weight: bold;
}

.sheet .on {
	background: #ffc070;
}

.sheet .active {
	position: relative;
	box-shadow: inset 0 0 0 2px #000;
}

/* fill handle */
.active::after {
	content: "";
	position: absolute;
	right: -2px;
	bottom: -2px;
	width: 5px;
	height: 5px;
	border: 1px solid #fff;
	border-width: 1px 0 0 1px;
	background: #000;
}
```
